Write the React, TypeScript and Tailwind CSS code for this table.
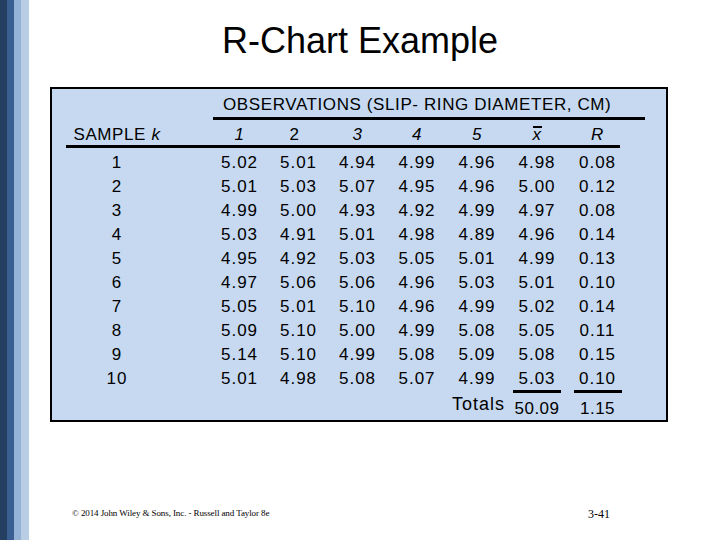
const rows = [
  ['1', '5.02', '5.01', '4.94', '4.99', '4.96', '4.98', '0.08'],
  ['2', '5.01', '5.03', '5.07', '4.95', '4.96', '5.00', '0.12'],
  ['3', '4.99', '5.00', '4.93', '4.92', '4.99', '4.97', '0.08'],
  ['4', '5.03', '4.91', '5.01', '4.98', '4.89', '4.96', '0.14'],
  ['5', '4.95', '4.92', '5.03', '5.05', '5.01', '4.99', '0.13'],
  ['6', '4.97', '5.06', '5.06', '4.96', '5.03', '5.01', '0.10'],
  ['7', '5.05', '5.01', '5.10', '4.96', '4.99', '5.02', '0.14'],
  ['8', '5.09', '5.10', '5.00', '4.99', '5.08', '5.05', '0.11'],
  ['9', '5.14', '5.10', '4.99', '5.08', '5.09', '5.08', '0.15'],
  ['10', '5.01', '4.98', '5.08', '5.07', '4.99', '5.03', '0.10'],
];

const cols = 'grid grid-cols-[102px_42px_59px_59px_59px_60px_60px_60px_61px]';

export default function App() {
  return (
    <div className="flex w-[720px] h-[540px] bg-white overflow-hidden font-['Liberation_Sans',Arial,sans-serif] text-black">
      {/* side stripes */}
      <div className="flex h-full shrink-0">
        <div className="w-[7px] bg-[#243f60]" />
        <div className="w-[7px] bg-[#3a6093]" />
        <div className="w-[7px] bg-[#95b3d7]" />
        <div className="w-[8px] bg-[#b9cde5]" />
      </div>

      <div className="flex flex-col flex-1">
        <h1 className="pr-[29px] pt-[20px] h-[87px] text-center text-[36px] leading-[42px]">R-Chart Example</h1>

        {/* table box */}
        <div className="ml-[21px] w-[618px] h-[335px] border-2 border-black bg-[#c6d9f1] text-[17px]">
          <div className="pl-[161px] pt-[6px]">
            <div className="w-[432px] border-b-[3px] border-black pl-[10px] leading-[20px] pb-[2px] tracking-[0.6px] whitespace-nowrap">
              OBSERVATIONS (SLIP- RING DIAMETER, CM)
            </div>
          </div>

          <div className="pl-[14px]">
            <div className="w-[554px] border-b-[3px] border-black">
              <div className={`${cols} h-[25px] items-end leading-[20px] tracking-[0.6px]`}>
                <div className="text-center whitespace-nowrap">SAMPLE <i>k</i></div>
                <div />
                <div className="text-center italic">1</div>
                <div className="text-center pr-[8px]">2</div>
                <div className="text-center italic">3</div>
                <div className="text-center italic">4</div>
                <div className="text-center italic">5</div>
                <div className="text-center italic">
                  <span className="relative inline-block">
                    x
                    <span className="absolute left-[1px] right-0 top-[1px] h-[2px] bg-black" />
                  </span>
                </div>
                <div className="text-center italic">R</div>
              </div>
            </div>

            <div className="pt-[2px]">
              {rows.map((r) => (
                <div key={r[0]} className={`${cols} h-[24px] items-center tracking-[1px]`}>
                  <div className="text-center">{r[0]}</div>
                  <div />
                  {r.slice(1).map((v, i) => (
                    <div key={i} className="text-center">{v}</div>
                  ))}
                </div>
              ))}

              <div className={`${cols} items-start`}>
                <div className="col-span-6" />
                <div className="text-right text-[18px] leading-[22px] pt-[3px] pr-[2px] tracking-[1px]">Totals</div>
                <div className="flex justify-center">
                  <div className="w-[48px] border-t-[3px] border-black text-center pt-[6px] leading-[20px] tracking-[0.5px]">50.09</div>
                </div>
                <div className="flex justify-center">
                  <div className="w-[48px] border-t-[3px] border-black text-center pt-[6px] leading-[20px] tracking-[0.5px]">1.15</div>
                </div>
              </div>
            </div>
          </div>
        </div>

        {/* footer */}
        <div className="flex items-center justify-between mt-[83px] pl-[43px] pr-[110px] font-['Liberation_Serif','Times_New_Roman',serif]">
          <span className="text-[9px] tracking-[-0.1px]">© 2014 John Wiley &amp; Sons, Inc. - Russell and Taylor 8e</span>
          <span className="text-[12px]">3-41</span>
        </div>
      </div>
    </div>
  );
}
